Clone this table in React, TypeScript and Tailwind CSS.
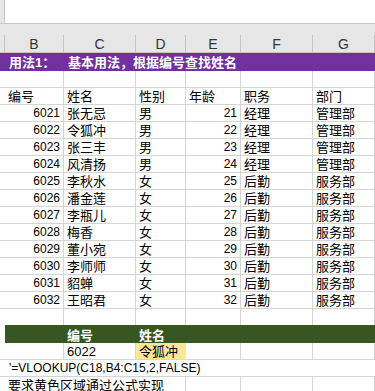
import type { ReactNode } from 'react'

// column widths: A (clipped), B..G
const GRID = 'grid grid-cols-[5px_59px_72px_50px_55px_72px_62px]'
const LINE = 'border-[#d4d4d4]'

type Staff = [number, string, string, number, string, string]

const staff: Staff[] = [
  [6021, '张无忌', '男', 21, '经理', '管理部'],
  [6022, '令狐冲', '男', 22, '经理', '管理部'],
  [6023, '张三丰', '男', 23, '经理', '管理部'],
  [6024, '风清扬', '男', 24, '经理', '管理部'],
  [6025, '李秋水', '女', 25, '后勤', '服务部'],
  [6026, '潘金莲', '女', 26, '后勤', '服务部'],
  [6027, '李瓶儿', '女', 27, '后勤', '服务部'],
  [6028, '梅香', '女', 28, '后勤', '服务部'],
  [6029, '董小宛', '女', 29, '后勤', '服务部'],
  [6030, '李师师', '女', 30, '后勤', '服务部'],
  [6031, '貂蝉', '女', 31, '后勤', '服务部'],
  [6032, '王昭君', '女', 32, '后勤', '服务部'],
]

const Cell = ({
  children,
  right,
  num,
  className = '',
}: {
  children?: ReactNode
  right?: boolean
  num?: boolean
  className?: string
}) => (
  <div
    className={`flex items-end border-r border-b ${LINE} px-[3px] pb-[1px] whitespace-nowrap leading-[13px] ${
      right ? 'justify-end' : ''
    } ${num ? 'text-[12px]' : 'text-[13px]'} ${className}`}
  >
    {children}
  </div>
)

const Blank = () => <div className={`border-b ${LINE}`} />

const Row = ({ cells }: { cells: (string | number | null)[] }) => (
  <div className={`${GRID} h-[17px]`}>
    <Blank />
    {cells.map((c, i) => (
      <Cell key={i} right={typeof c === 'number'} num={typeof c === 'number'}>
        {c}
      </Cell>
    ))}
  </div>
)

export default function App() {
  return (
    <div className="w-[375px] h-[391px] overflow-hidden bg-white text-black font-['Liberation_Sans','Noto_Sans_CJK_SC',sans-serif]">
      {/* formula bar strip */}
      <div className="flex h-[24px] border-b border-[#c6c6c6]">
        <div className="w-[5px] bg-[#e6e6e6] border-r border-[#c6c6c6]" />
        <div className="flex-1 bg-white" />
      </div>
      <div className="h-[11px] bg-[#e6e6e6]" />

      {/* column letters */}
      <div className={`${GRID} h-[18px] bg-[#e6e6e6] border-b border-[#c6c6c6]`}>
        {['', 'B', 'C', 'D', 'E', 'F', 'G'].map((l, i) => (
          <div
            key={i}
            className="flex items-center justify-center border-r border-[#c4c4c4] text-[14px] text-[#333] leading-none"
          >
            {l}
          </div>
        ))}
      </div>

      {/* section title */}
      <div className={`${GRID} h-[18px] bg-[#7030a0] text-white font-bold text-[13px]`}>
        <div />
        <div className="flex items-center px-[4px] whitespace-nowrap">用法1：</div>
        <div className="flex items-center px-[4px] whitespace-nowrap">基本用法，根据编号查找姓名</div>
      </div>

      <Row cells={[null, null, null, null, null, null]} />
      <Row cells={['编号', '姓名', '性别', '年龄', '职务', '部门']} />
      {staff.map((s) => (
        <Row key={s[0]} cells={s} />
      ))}
      <div className={`${GRID} h-[16px]`}>
        <div />
        {[0, 1, 2, 3, 4, 5].map((i) => (
          <div key={i} className={`border-r ${LINE}`} />
        ))}
      </div>

      {/* lookup block */}
      <div className={`${GRID} h-[18px]`}>
        <div />
        <div className="col-span-6 bg-[#375623] grid grid-cols-[59px_72px_50px_1fr] text-white font-bold text-[13px]">
          <div />
          <div className="flex items-end px-[3px] pb-[1px] leading-[13px]">编号</div>
          <div className="flex items-end px-[3px] pb-[1px] leading-[13px]">姓名</div>
        </div>
      </div>
      <div className={`${GRID} h-[17px]`}>
        <Blank />
        <Cell />
        <Cell>6022</Cell>
        <Cell className="bg-[#ffe699] border-r-[#ffe699]">令狐冲</Cell>
        <Cell />
        <Cell />
        <Cell />
      </div>
      <div className={`h-[17px] border-b ${LINE} flex items-end pl-[9px] pb-[1px] text-[12px] leading-[13px] whitespace-nowrap`}>
        '=VLOOKUP(C18,B4:C15,2,FALSE)
      </div>
      <div className={`${GRID} h-[17px]`}>
        <Blank />
        <Cell className="col-span-3">要求黄色区域通过公式实现</Cell>
        <Cell />
        <Cell />
        <Cell />
      </div>
    </div>
  )
}
